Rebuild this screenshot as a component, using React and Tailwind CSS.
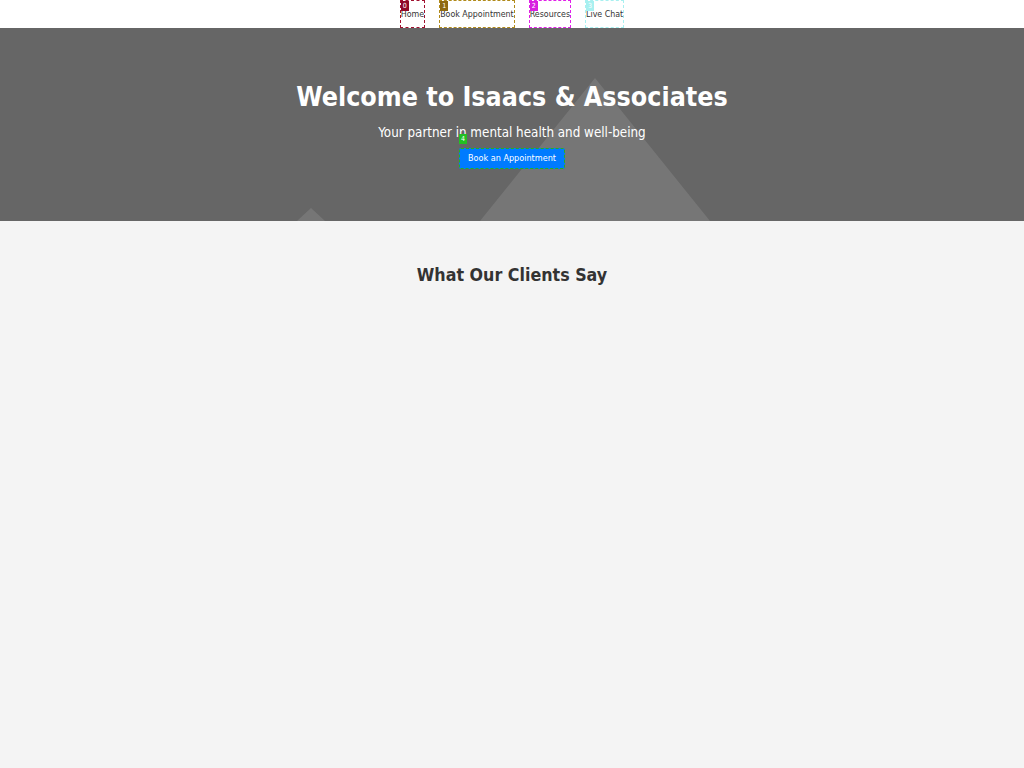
import React from "react";

const navItems = [
  { label: "Home", badge: "0", border: "border-[#a0102e]", badgeBg: "bg-[#8f0a28]" },
  { label: "Book Appointment", badge: "1", border: "border-[#b08a1a]", badgeBg: "bg-[#8f6a10]" },
  { label: "Resources", badge: "2", border: "border-[#e020e8]", badgeBg: "bg-[#d81ee0]" },
  { label: "Live Chat", badge: "3", border: "border-[#a8f0f0]", badgeBg: "bg-[#a8f0f0]" },
];

function Badge({ text, className }) {
  return (
    <span
      className={`absolute left-0 top-0 flex h-[10px] w-[8px] items-center justify-center text-[7px] leading-none text-white ${className}`}
    >
      {text}
    </span>
  );
}

export default function App() {
  return (
    <div className="min-h-screen bg-[#f4f4f4] font-['DejaVu_Sans_Condensed','DejaVu_Sans',sans-serif] font-stretch-condensed text-[#333]">
      {/* Top navigation */}
      <header className="flex h-[28px] justify-center bg-white shadow-[0_1px_2px_rgba(0,0,0,0.12)]">
        <nav className="flex gap-[14px]">
          {navItems.map((item) => (
            <a
              key={item.label}
              href="#"
              className={`relative flex h-[28px] items-center whitespace-nowrap border border-dashed ${item.border} text-[8.8px] leading-none text-[#333]`}
            >
              <Badge text={item.badge} className={item.badgeBg} />
              <span className="pt-[1px]">{item.label}</span>
            </a>
          ))}
        </nav>
      </header>

      {/* Hero */}
      <section className="relative h-[193px] overflow-hidden bg-[#666]">
        <svg
          className="absolute inset-0 h-full w-full"
          viewBox="0 0 1024 193"
          preserveAspectRatio="none"
        >
          <polygon points="595,50 480,193 710,193" fill="#ffffff" fillOpacity="0.11" />
          <polygon points="311,180 297,193 325,193" fill="#ffffff" fillOpacity="0.11" />
        </svg>
        <div className="relative flex flex-col items-center pt-[53px] text-center text-white">
          <h1 className="text-[26.6px] font-bold leading-[32px]">Welcome to Isaacs &amp; Associates</h1>
          <p className="mt-[11px] text-[13.3px] leading-[18px]">Your partner in mental health and well-being</p>
          <div className="relative mt-[2px]">
            <span className="absolute -top-[10px] left-0 flex h-[10px] w-[8px] items-center justify-center bg-[#22c022] text-[7px] leading-none text-white">
              4
            </span>
            <button className="h-[21px] w-[106px] whitespace-nowrap rounded-[2px] border border-dashed border-[#22b022] bg-[#007bff] text-[9px] leading-none text-white">
              Book an Appointment
            </button>
          </div>
        </div>
      </section>

      {/* Testimonials */}
      <section className="flex justify-center pt-[42px]">
        <h2 className="text-[17.7px] font-bold leading-[24px] text-[#333]">What Our Clients Say</h2>
      </section>
    </div>
  );
}
